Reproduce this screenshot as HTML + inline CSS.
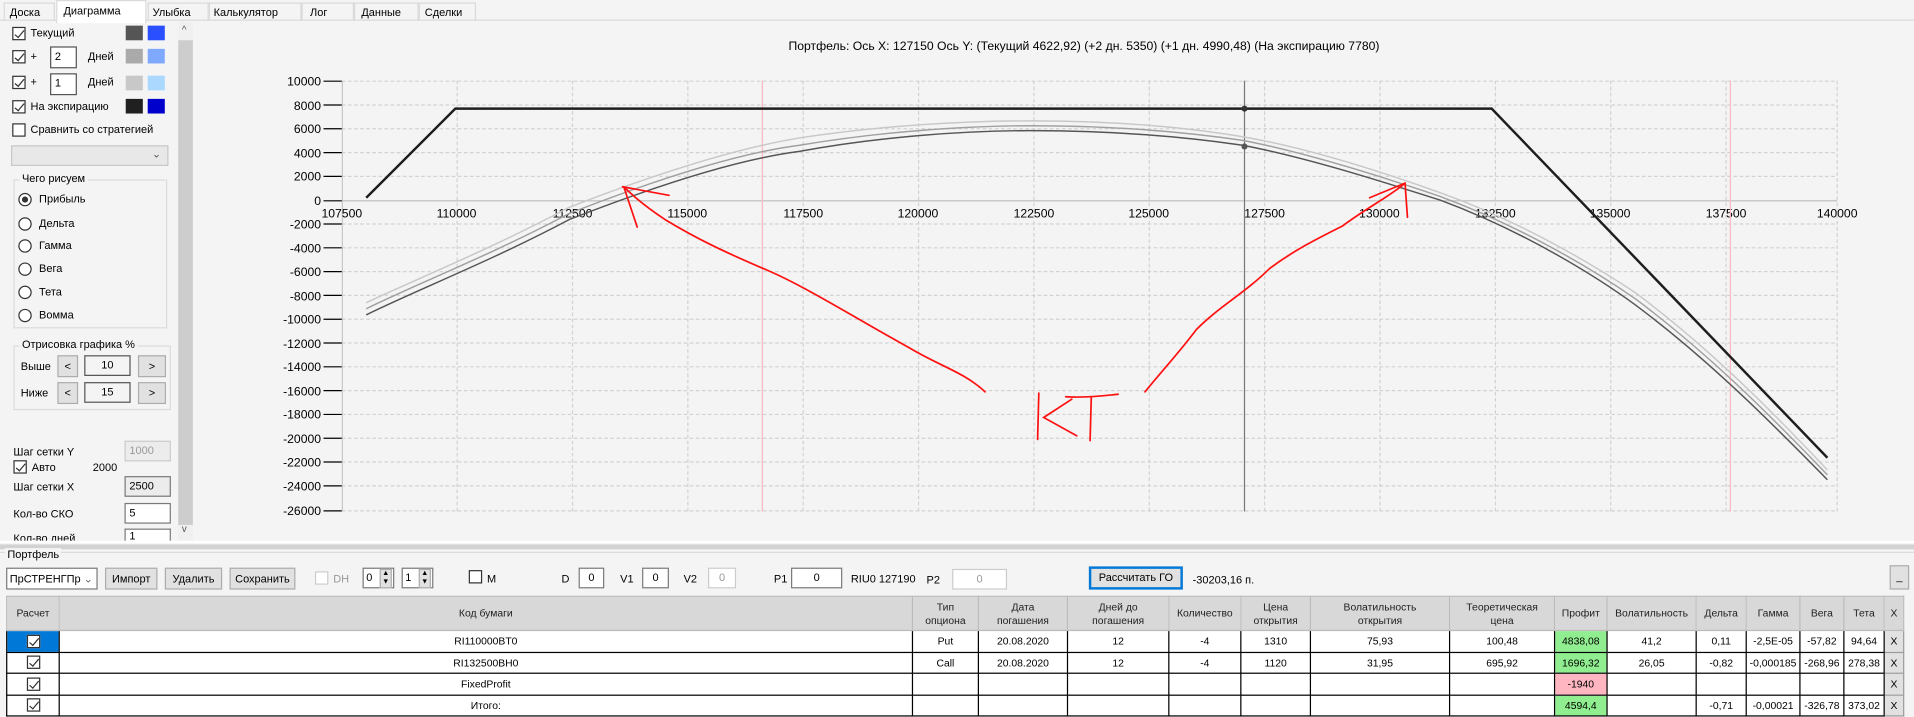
<!DOCTYPE html>
<html><head><meta charset="utf-8">
<style>
*{box-sizing:border-box}
body{margin:0;width:1914px;height:716px;background:#f4f4f4;overflow:hidden}
#w{position:absolute;left:0;top:0;width:1568px;height:587px;transform:scale(1.2207);transform-origin:0 0;font-family:"Liberation Sans",sans-serif;font-size:9px;color:#000}
.a{position:absolute;white-space:nowrap}
.cb{position:absolute;width:11px;height:11px;border:1px solid #333;background:#fff}
.cb.k::after{content:"";position:absolute;left:3px;top:0px;width:3px;height:7px;border:solid #333;border-width:0 1px 1px 0;transform:rotate(40deg)}
.rb{position:absolute;width:11px;height:11px;border:1px solid #333;border-radius:50%;background:#fff}
.rb.k::after{content:"";position:absolute;left:2px;top:2px;width:5px;height:5px;border-radius:50%;background:#333}
.sw{position:absolute;width:14px;height:12px}
.tb{position:absolute;border:1px solid #7a7a7a;background:#fff;height:17px;font-size:9px;padding:2px 3px;white-space:nowrap}
.btn{position:absolute;border:1px solid #adadad;background:#e1e1e1;height:18px;text-align:center;line-height:16px;font-size:9px;white-space:nowrap}
.grp{position:absolute;border:1px solid #dcdcdc}
.gl{position:absolute;background:#f4f4f4;padding:0 2px;top:-7px;left:4px;white-space:nowrap}
table{border-collapse:collapse;position:absolute;left:5px;top:488px;font-size:8.5px;background:#fff;table-layout:fixed}
td{border:1px solid #000;text-align:center;padding:0;height:17.5px;white-space:nowrap;overflow:hidden}
tr.h td{background:#d8d8d8;height:28px;line-height:11px;border-color:#bbb;color:#222}
.g{background:#90ee90}.p{background:#ffb6c1}
.x{background:#e1e1e1;border:1px solid #999}
</style></head><body><div id="w">
<!-- tabs -->
<div class="a" style="left:0;top:0;width:1568px;height:17px;border-bottom:1px solid #dadada"></div>
<div class="a" style="left:3px;top:2px;width:42px;height:15px;border:1px solid #dadada;border-bottom:none;padding:2px 4px">Доска</div>
<div class="a" style="left:46px;top:0;width:74px;height:19px;background:#fff;border:1px solid #dadada;border-bottom:none;padding:3px 5px">Диаграмма</div>
<div class="a" style="left:121px;top:2px;width:50px;height:15px;border:1px solid #dadada;border-bottom:none;padding:2px 3px">Улыбка</div>
<div class="a" style="left:171px;top:2px;width:76px;height:15px;border:1px solid #dadada;border-bottom:none;padding:2px 3px">Калькулятор</div>
<div class="a" style="left:247px;top:2px;width:43px;height:15px;border:1px solid #dadada;border-bottom:none;padding:2px 6px">Лог</div>
<div class="a" style="left:290px;top:2px;width:53px;height:15px;border:1px solid #dadada;border-bottom:none;padding:2px 5px">Данные</div>
<div class="a" style="left:343px;top:2px;width:47px;height:15px;border:1px solid #dadada;border-bottom:none;padding:2px 4px">Сделки</div>

<!-- left panel -->
<div class="cb k" style="left:10px;top:22px"></div><div class="a" style="left:25px;top:22px">Текущий</div>
<div class="sw" style="left:103px;top:21px;background:#555"></div><div class="sw" style="left:121px;top:21px;background:#2a4fff"></div>
<div class="cb k" style="left:10px;top:41px"></div><div class="a" style="left:25px;top:41px">+</div>
<div class="tb" style="left:41px;top:38px;width:22px;height:18px;border-color:#555">2</div><div class="a" style="left:72px;top:41px">Дней</div>
<div class="sw" style="left:103px;top:40px;background:#aaa"></div><div class="sw" style="left:121px;top:40px;background:#7fa8ff"></div>
<div class="cb k" style="left:10px;top:62px"></div><div class="a" style="left:25px;top:62px">+</div>
<div class="tb" style="left:41px;top:60px;width:22px;height:18px;border-color:#555">1</div><div class="a" style="left:72px;top:62px">Дней</div>
<div class="sw" style="left:103px;top:62px;background:#c8c8c8"></div><div class="sw" style="left:121px;top:62px;background:#aad8ff"></div>
<div class="cb k" style="left:10px;top:82px"></div><div class="a" style="left:25px;top:82px">На экспирацию</div>
<div class="sw" style="left:103px;top:81px;background:#202020"></div><div class="sw" style="left:121px;top:81px;background:#0000cc"></div>
<div class="cb" style="left:10px;top:101px"></div><div class="a" style="left:25px;top:101px">Сравнить со стратегией</div>
<div class="a" style="left:9px;top:119px;width:129px;height:17px;border:1px solid #c8c8c8;background:#e8e8e8"><span style="position:absolute;right:5px;top:1px;color:#555">⌄</span></div>
<div class="grp" style="left:11px;top:147px;width:126px;height:122px"><span class="gl" style="left:4px">Чего рисуем</span></div>
<div class="rb k" style="left:15px;top:158px"></div><div class="a" style="left:32px;top:158px">Прибыль</div>
<div class="rb" style="left:15px;top:178px"></div><div class="a" style="left:32px;top:178px">Дельта</div>
<div class="rb" style="left:15px;top:196px"></div><div class="a" style="left:32px;top:196px">Гамма</div>
<div class="rb" style="left:15px;top:215px"></div><div class="a" style="left:32px;top:215px">Вега</div>
<div class="rb" style="left:15px;top:234px"></div><div class="a" style="left:32px;top:234px">Тета</div>
<div class="rb" style="left:15px;top:253px"></div><div class="a" style="left:32px;top:253px">Вомма</div>
<div class="grp" style="left:11px;top:283px;width:129px;height:53px"><span class="gl">Отрисовка графика %</span></div>
<div class="a" style="left:17px;top:295px">Выше</div>
<div class="btn" style="left:47px;top:291px;width:17px">&lt;</div><div class="tb" style="left:69px;top:291px;width:38px;text-align:center;background:#f4f4f4;border-color:#555">10</div><div class="btn" style="left:113px;top:291px;width:23px">&gt;</div>
<div class="a" style="left:17px;top:317px">Ниже</div>
<div class="btn" style="left:47px;top:313px;width:17px">&lt;</div><div class="tb" style="left:69px;top:313px;width:38px;text-align:center;background:#f4f4f4;border-color:#555">15</div><div class="btn" style="left:113px;top:313px;width:23px">&gt;</div>
<div class="a" style="left:11px;top:365px">Шаг сетки Y</div>
<div class="tb" style="left:102px;top:361px;width:38px;background:#ececec;border-color:#ccc;color:#999">1000</div>
<div class="cb k" style="left:11px;top:377px"></div><div class="a" style="left:26px;top:378px">Авто</div><div class="a" style="left:76px;top:378px">2000</div>
<div class="a" style="left:11px;top:394px">Шаг сетки X</div>
<div class="tb" style="left:102px;top:390px;width:38px;background:#ececec">2500</div>
<div class="a" style="left:11px;top:416px">Кол-во СКО</div>
<div class="tb" style="left:102px;top:412px;width:38px">5</div>
<div class="a" style="left:11px;top:436px;height:7px;overflow:hidden">Кол-во дней</div>
<div class="tb" style="left:102px;top:433px;width:38px;height:10px;border-bottom:none;padding-top:0">1</div>
<div class="a" style="left:146px;top:18px;width:12px;height:425px;background:#f0f0f0"></div>
<div class="a" style="left:146px;top:33px;width:12px;height:397px;background:#cdcdcd"></div>
<div class="a" style="left:149px;top:20px;color:#555;font-size:8px">^</div>
<div class="a" style="left:149px;top:429px;color:#555;font-size:8px">v</div>

<!-- chart -->
<svg class="a" style="left:0;top:0" width="1568" height="445">
<text x="888" y="41" text-anchor="middle" font-family="Liberation Sans" font-size="10">Портфель: Ось X: 127150 Ось Y:  (Текущий 4622,92)  (+2 дн. 5350)  (+1 дн. 4990,48)  (На экспирацию 7780)</text>
<g stroke="#d2d2d2" stroke-dasharray="3,2" stroke-width="1">
<line x1="280" y1="66.5" x2="1505" y2="66.5"/><line x1="280" y1="86" x2="1505" y2="86"/><line x1="280" y1="105.5" x2="1505" y2="105.5"/><line x1="280" y1="125" x2="1505" y2="125"/><line x1="280" y1="144.5" x2="1505" y2="144.5"/>
<line x1="280" y1="183.5" x2="1505" y2="183.5"/><line x1="280" y1="203" x2="1505" y2="203"/><line x1="280" y1="222.5" x2="1505" y2="222.5"/><line x1="280" y1="242" x2="1505" y2="242"/><line x1="280" y1="261.5" x2="1505" y2="261.5"/><line x1="280" y1="281" x2="1505" y2="281"/><line x1="280" y1="300.5" x2="1505" y2="300.5"/><line x1="280" y1="320" x2="1505" y2="320"/><line x1="280" y1="339.5" x2="1505" y2="339.5"/><line x1="280" y1="359" x2="1505" y2="359"/><line x1="280" y1="378.5" x2="1505" y2="378.5"/><line x1="280" y1="398" x2="1505" y2="398"/><line x1="280" y1="418.5" x2="1505" y2="418.5"/>
<line x1="374.5" y1="66" x2="374.5" y2="419"/><line x1="469" y1="66" x2="469" y2="419"/><line x1="563.5" y1="66" x2="563.5" y2="419"/><line x1="658" y1="66" x2="658" y2="419"/><line x1="752.5" y1="66" x2="752.5" y2="419"/><line x1="847" y1="66" x2="847" y2="419"/><line x1="941.5" y1="66" x2="941.5" y2="419"/><line x1="1036" y1="66" x2="1036" y2="419"/><line x1="1130.5" y1="66" x2="1130.5" y2="419"/><line x1="1225" y1="66" x2="1225" y2="419"/><line x1="1319.5" y1="66" x2="1319.5" y2="419"/><line x1="1414" y1="66" x2="1414" y2="419"/><line x1="1505" y1="66" x2="1505" y2="419"/>
</g>
<line x1="280.5" y1="66" x2="280.5" y2="419" stroke="#c8c8c8"/>
<line x1="280" y1="164.5" x2="1505" y2="164.5" stroke="#bbb"/>
<g stroke="#000"><line x1="265" y1="66.5" x2="280" y2="66.5"/><line x1="265" y1="86" x2="280" y2="86"/><line x1="265" y1="105.5" x2="280" y2="105.5"/><line x1="265" y1="125" x2="280" y2="125"/><line x1="265" y1="144.5" x2="280" y2="144.5"/><line x1="265" y1="164.5" x2="280" y2="164.5"/><line x1="265" y1="183.5" x2="280" y2="183.5"/><line x1="265" y1="203" x2="280" y2="203"/><line x1="265" y1="222.5" x2="280" y2="222.5"/><line x1="265" y1="242" x2="280" y2="242"/><line x1="265" y1="261.5" x2="280" y2="261.5"/><line x1="265" y1="281" x2="280" y2="281"/><line x1="265" y1="300.5" x2="280" y2="300.5"/><line x1="265" y1="320" x2="280" y2="320"/><line x1="265" y1="339.5" x2="280" y2="339.5"/><line x1="265" y1="359" x2="280" y2="359"/><line x1="265" y1="378.5" x2="280" y2="378.5"/><line x1="265" y1="398" x2="280" y2="398"/><line x1="265" y1="418.5" x2="280" y2="418.5"/></g>
<g font-family="Liberation Sans" font-size="10" text-anchor="end">
<text x="263" y="70">10000</text><text x="263" y="90">8000</text><text x="263" y="109">6000</text><text x="263" y="129">4000</text><text x="263" y="148">2000</text><text x="263" y="168">0</text><text x="263" y="187">-2000</text><text x="263" y="207">-4000</text><text x="263" y="226">-6000</text><text x="263" y="246">-8000</text><text x="263" y="265">-10000</text><text x="263" y="285">-12000</text><text x="263" y="304">-14000</text><text x="263" y="324">-16000</text><text x="263" y="343">-18000</text><text x="263" y="363">-20000</text><text x="263" y="382">-22000</text><text x="263" y="402">-24000</text><text x="263" y="422">-26000</text>
</g>
<g font-family="Liberation Sans" font-size="10" text-anchor="middle">
<text x="280" y="178">107500</text><text x="374" y="178">110000</text><text x="469" y="178">112500</text><text x="563" y="178">115000</text><text x="658" y="178">117500</text><text x="752" y="178">120000</text><text x="847" y="178">122500</text><text x="941" y="178">125000</text><text x="1036" y="178">127500</text><text x="1130" y="178">130000</text><text x="1225" y="178">132500</text><text x="1319" y="178">135000</text><text x="1414" y="178">137500</text><text x="1505" y="178">140000</text>
</g>
<line x1="624.5" y1="66" x2="624.5" y2="419" stroke="#ffb6c1"/>
<line x1="1417.5" y1="66" x2="1417.5" y2="419" stroke="#ffb6c1"/>
<line x1="1019.5" y1="66" x2="1019.5" y2="419" stroke="#777"/>
<g fill="none" stroke-width="1.2">
<path stroke="#c8c8c8" d="M300,248 C340,229 400,205 466,170 C530,145 600,122 655,113 C720,103 790,99 845,99 C910,99 970,104 1018,112 C1070,121 1130,140 1180,158 C1250,183 1310,220 1340,240 C1400,285 1450,335 1497,385"/>
<path stroke="#a0a0a0" d="M300,253 C340,233 400,210 466,175 C530,150 600,126 655,119 C720,108 790,103 845,103 C910,103 970,108 1018,115 C1070,125 1130,144 1180,161 C1250,187 1310,224 1340,245 C1400,290 1450,340 1497,389"/>
<path stroke="#555" d="M300,258 C340,238 400,215 466,180 C530,155 600,131 655,124 C720,112 790,107 845,107 C910,107 970,112 1018,119 C1070,129 1130,148 1180,164 C1250,190 1310,228 1340,250 C1400,295 1450,345 1497,393"/>
<polyline stroke="#1e1e1e" stroke-width="2" points="300,162 373,89 1222,89 1497,375"/>
</g>
<circle cx="1019.5" cy="89" r="2.5" fill="#333"/><circle cx="1019.5" cy="120" r="2.5" fill="#555"/>
<g fill="none" stroke="#ff1010" stroke-width="1.4" stroke-linecap="round">
<path d="M807,321 C790,305 770,300 745,285 C700,260 660,235 630,222 C590,205 570,195 545,180 C530,170 520,162 511,153"/>
<path d="M511,153 L522,186"/><path d="M510,153 L548,160"/>
<path d="M938,321 C955,300 965,290 980,270 C1000,250 1020,240 1040,220 C1060,205 1080,195 1100,185 C1120,170 1140,160 1151,150"/>
<path d="M1151,150 L1122,162"/><path d="M1151,150 L1153,178"/>
<path d="M851,322 L850,360"/><path d="M878,327 L855,342 L882,357"/>
<path d="M873,325 C890,326 905,324 916,323"/><path d="M894,325 L893,361"/>
</g>
</svg>

<!-- splitter -->
<div class="a" style="left:0;top:443px;width:1568px;height:2px;background:#fff"></div>
<div class="a" style="left:0;top:446px;width:1568px;height:4px;background:#d2d2d2"></div>
<div class="a" style="left:0;top:452px;width:1568px;height:1px;background:#dcdcdc"></div>
<div class="a" style="left:4px;top:449px;padding:0 2px;background:#f4f4f4">Портфель</div>

<!-- toolbar -->
<div class="a" style="left:5px;top:465px;width:75px;height:18px;border:1px solid #7a7a7a;background:#fff;padding:3px 2px">ПрСТРЕНГПр <span style="color:#666">⌄</span></div>
<div class="btn" style="left:86px;top:465px;width:43px">Импорт</div>
<div class="btn" style="left:135px;top:465px;width:47px">Удалить</div>
<div class="btn" style="left:188px;top:465px;width:54px">Сохранить</div>
<div class="cb" style="left:258px;top:468px;border-color:#ccc"></div><div class="a" style="left:273px;top:469px;color:#999">DH</div>
<div class="tb" style="left:297px;top:465px;width:26px;padding:2px 2px">0</div><div class="btn" style="left:311px;top:466px;width:10px;height:16px;font-size:6px;line-height:7px">▲<br>▼</div>
<div class="tb" style="left:329px;top:465px;width:26px;padding:2px 2px">1</div><div class="btn" style="left:343px;top:466px;width:10px;height:16px;font-size:6px;line-height:7px">▲<br>▼</div>
<div class="cb" style="left:384px;top:467px"></div><div class="a" style="left:399px;top:469px">M</div>
<div class="a" style="left:460px;top:469px">D</div><div class="tb" style="left:474px;top:465px;width:21px;text-align:center">0</div>
<div class="a" style="left:508px;top:469px">V1</div><div class="tb" style="left:526px;top:465px;width:22px;text-align:center">0</div>
<div class="a" style="left:560px;top:469px">V2</div><div class="tb" style="left:580px;top:465px;width:23px;text-align:center;border-color:#ccc;color:#999">0</div>
<div class="a" style="left:634px;top:469px">P1</div><div class="tb" style="left:648px;top:465px;width:42px;text-align:center">0</div>
<div class="a" style="left:697px;top:469px">RIU0 127190</div>
<div class="a" style="left:759px;top:470px">P2</div><div class="tb" style="left:780px;top:466px;width:45px;text-align:center;border-color:#ccc;color:#999">0</div>
<div class="btn" style="left:892px;top:464px;width:77px;height:19px;border:2px solid #0078d7;line-height:15px">Рассчитать ГО</div>
<div class="a" style="left:977px;top:470px">-30203,16 п.</div>
<div class="btn" style="left:1548px;top:463px;width:16px;height:20px">_</div>

<!-- table -->
<table>
<colgroup><col style="width:43px"><col style="width:699px"><col style="width:54px"><col style="width:73px"><col style="width:83px"><col style="width:59px"><col style="width:57px"><col style="width:114px"><col style="width:86px"><col style="width:43px"><col style="width:73px"><col style="width:41px"><col style="width:44px"><col style="width:36px"><col style="width:33px"><col style="width:16px"></colgroup>
<tr class="h"><td>Расчет</td><td>Код бумаги</td><td>Тип<br>опциона</td><td>Дата<br>погашения</td><td>Дней до<br>погашения</td><td>Количество</td><td>Цена<br>открытия</td><td>Волатильность<br>открытия</td><td>Теоретическая<br>цена</td><td>Профит</td><td>Волатильность</td><td>Дельта</td><td>Гамма</td><td>Вега</td><td>Тета</td><td>X</td></tr>
<tr><td style="background:#0078d7"><div class="cb k" style="position:relative;margin:auto;left:0;top:0"></div></td><td>RI110000BT0</td><td>Put</td><td>20.08.2020</td><td>12</td><td>-4</td><td>1310</td><td>75,93</td><td>100,48</td><td class="g">4838,08</td><td>41,2</td><td>0,11</td><td>-2,5E-05</td><td>-57,82</td><td>94,64</td><td class="x">X</td></tr>
<tr><td><div class="cb k" style="position:relative;margin:auto;left:0;top:0"></div></td><td>RI132500BH0</td><td>Call</td><td>20.08.2020</td><td>12</td><td>-4</td><td>1120</td><td>31,95</td><td>695,92</td><td class="g">1696,32</td><td>26,05</td><td>-0,82</td><td>-0,000185</td><td>-268,96</td><td>278,38</td><td class="x">X</td></tr>
<tr><td><div class="cb k" style="position:relative;margin:auto;left:0;top:0"></div></td><td>FixedProfit</td><td></td><td></td><td></td><td></td><td></td><td></td><td></td><td class="p">-1940</td><td></td><td></td><td></td><td></td><td></td><td class="x">X</td></tr>
<tr><td><div class="cb k" style="position:relative;margin:auto;left:0;top:0"></div></td><td>Итого:</td><td></td><td></td><td></td><td></td><td></td><td></td><td></td><td class="g">4594,4</td><td></td><td>-0,71</td><td>-0,00021</td><td>-326,78</td><td>373,02</td><td class="x">X</td></tr>
</table>
</div></body></html>
